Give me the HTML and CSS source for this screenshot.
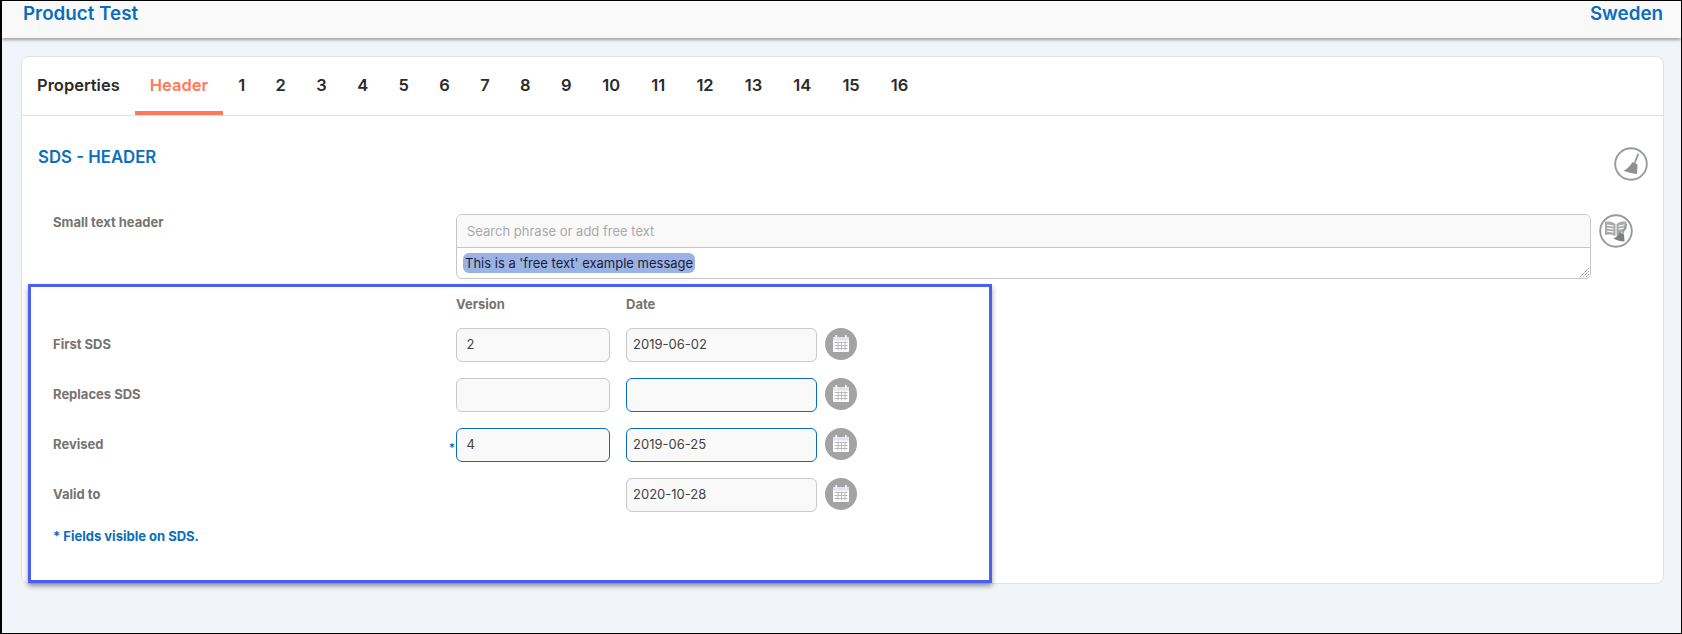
FILE: index.html
```html
<!DOCTYPE html>
<html lang="en">
<head>
<meta charset="utf-8">
<title>SDS Header</title>
<link rel="stylesheet" href="styles.css">
</head>
<body>
<div class="frame">
  <header class="topbar">
    <span class="topbar-title">Product Test</span>
    <span class="topbar-title">Sweden</span>
  </header>
  <main class="content">
    <section class="card">
      <nav class="tabs">
        <a class="tab">Properties</a>
        <a class="tab tab-active">Header</a>
        <a class="tab tab-num">1</a><a class="tab tab-num">2</a><a class="tab tab-num">3</a><a class="tab tab-num">4</a>
        <a class="tab tab-num">5</a><a class="tab tab-num">6</a><a class="tab tab-num">7</a><a class="tab tab-num">8</a>
        <a class="tab tab-num">9</a><a class="tab tab-wide">10</a><a class="tab tab-wide">11</a><a class="tab tab-wide">12</a>
        <a class="tab tab-wide">13</a><a class="tab tab-wide">14</a><a class="tab tab-wide">15</a><a class="tab tab-wide">16</a>
      </nav>
      <div class="body">
        <div class="title-row">
          <h2 class="section-title">SDS - HEADER</h2>
          <span class="ring-icon">
            <svg viewBox="0 0 34 34" width="34" height="34"><circle cx="17" cy="17" r="15.8" fill="#fff" stroke="#999" stroke-width="1.9"/><path d="M24.4 6.8 20.6 16" stroke="#8a9bb0" stroke-width="1.8" fill="none"/><path d="M18.5 15 23.5 17.2 23 27C18 26.5 13 25.5 9.5 23.5 12.5 22.5 16 19.5 18.5 15Z" fill="#8f8f8f"/></svg>
          </span>
        </div>
        <div class="text-row">
          <label class="field-label">Small text header</label>
          <div class="phrase-box">
            <div class="phrase-search">Search phrase or add free text</div>
            <div class="phrase-text">
              <span class="chip">This is a 'free text' example message</span>
              <svg class="grip" viewBox="0 0 9 9" width="9" height="9"><path d="M8.5.5.5 8.5M8.5 3.5 3.5 8.5M8.5 6.5 6.5 8.5" stroke="#555" stroke-width="1" stroke-dasharray="1 1" fill="none"/></svg>
            </div>
          </div>
          <span class="ring-icon">
            <svg viewBox="0 0 34 34" width="34" height="34"><circle cx="17" cy="17" r="15.8" fill="#fff" stroke="#999" stroke-width="1.9"/><path d="M6 8C10 7 14 8 16.5 10V22C14 20.5 10 20 6 21Z" fill="#a9a9a9"/><path d="M17.5 10C20 8 24 7 27.5 8V15L22 19 17.5 22Z" fill="#a9a9a9"/><path d="M8 11 14.5 12.2M8 14 14.5 15.2M8 17 14.5 18.2M19.5 12.2 25.5 11M19.5 15.2 25.5 14" stroke="#fff" stroke-width="1.2"/><path d="M27.5 10 23.5 20" stroke="#8a9bb0" stroke-width="1.5"/><path d="M20.5 18.5 25 20.5 25.5 27.5C21.5 27.5 18 26.5 14.5 24.5 17 23.5 19 21.5 20.5 18.5Z" fill="#7f7f7f"/></svg>
          </span>
        </div>
        <div class="dates">
          <div class="dates-head dates-head-first">Version</div>
          <div class="dates-head dates-head-date">Date</div>
          <span></span>
          <label class="field-label">First SDS</label>
          <div class="input">2</div>
          <div class="input input-date">2019-06-02</div>
          <span class="cal"><svg viewBox="0 0 32 32" width="32" height="32"><use href="#calendar"/></svg></span>
          <label class="field-label">Replaces SDS</label>
          <div class="input"></div>
          <div class="input input-date input-focus"></div>
          <span class="cal"><svg viewBox="0 0 32 32" width="32" height="32"><use href="#calendar"/></svg></span>
          <label class="field-label">Revised</label>
          <div class="input input-focus"><i class="star">*</i>4</div>
          <div class="input input-date input-focus">2019-06-25</div>
          <span class="cal"><svg viewBox="0 0 32 32" width="32" height="32"><use href="#calendar"/></svg></span>
          <label class="field-label">Valid to</label>
          <span></span>
          <div class="input input-date">2020-10-28</div>
          <span class="cal"><svg viewBox="0 0 32 32" width="32" height="32"><use href="#calendar"/></svg></span>
        </div>
        <p class="note">* Fields visible on SDS.</p>
      </div>
      <div class="highlight"></div>
    </section>
  </main>
</div>
<svg class="defs" width="0" height="0">
  <defs>
    <g id="calendar">
      <circle cx="16" cy="16" r="16" fill="#a3a3a3"/>
      <rect x="8" y="9" width="16" height="15" rx="1" fill="#fff"/>
      <rect x="8" y="9" width="16" height="3.5" fill="#e4e0ee"/>
      <rect x="10.5" y="7" width="1.6" height="3.5" fill="#fff"/>
      <rect x="20" y="7" width="1.6" height="3.5" fill="#fff"/>
      <path d="M9.5 14.5H22.5M9.5 17.5H22.5M9.5 20.5H22.5M13 13.5V22.5M16.5 13.5V22.5M20 13.5V22.5" stroke="#b3b3b3" stroke-width=".9" fill="none"/>
    </g>
  </defs>
</svg>
</body>
</html>
```
FILE: styles.css
```css
* { box-sizing: border-box; }
html, body { margin: 0; padding: 0; }
body { font-family: Inter, "Liberation Sans", sans-serif; }
.frame {
  width: 1682px; height: 634px; overflow: hidden;
  border: 1px solid #000; border-left-width: 2px;
  background: #f1f5f9; display: flex; flex-direction: column;
}
.topbar {
  height: 37px; flex: none; background: #f9f9f9; padding: 2px 18px 0 21px;
  display: flex; justify-content: space-between; align-items: flex-start;
  box-shadow: 0 2px 3px rgba(0,0,0,.35); position: relative;
}
.topbar-title { font-size: 18.8px; line-height: 22px; font-weight: 600; color: #0a6ebd; }
.content { padding: 18px 17px 0 19px; }
.card {
  position: relative; height: 528px; background: #fff;
  border: 1px solid #dfe1e4; border-radius: 8px;
}
.tabs { display: flex; height: 59px; border-bottom: 1px solid #dfe1e4; }
.tab {
  padding: 0 15px; height: 58px; line-height: 57px; font-size: 16.5px; font-weight: 600;
  color: #2b2b2b; border-bottom: 4px solid transparent;
}
.tab-num { padding: 0 15.2px; }
.tab-wide { padding: 0 15.55px; }
.tab-active { color: #ff7a5c; border-bottom-color: #ff7a5c; }
.body { padding: 0 16px; }
.title-row { display: flex; justify-content: space-between; align-items: flex-start; padding-top: 32px; height: 98px; }
.section-title { margin: 0; font-size: 16.8px; line-height: 18px; font-weight: 600; color: #0a6ebd; }
.ring-icon { display: block; width: 34px; height: 34px; flex: none; }
.title-row .ring-icon { margin-right: -1px; margin-top: -1px; }
.text-row { display: flex; align-items: flex-start; }
.field-label { font-size: 13px; line-height: 16px; font-weight: 700; color: #77736f; }
.text-row .field-label { width: 418px; padding-left: 15px; flex: none; }
.phrase-box { width: 1135px; height: 65px; border: 1px solid #c6c6c6; border-radius: 6px; overflow: hidden; flex: none; }
.phrase-search {
  height: 33px; background: #f9f9f9; border-bottom: 1px solid #c6c6c6;
  padding: 0 10px; font-size: 13px; line-height: 33px; color: #a9a9a9;
}
.phrase-text { position: relative; padding: 5px 6px; height: 30px; }
.chip {
  display: block; width: max-content; background: #9ab3e3; border-radius: 6px; height: 20px;
  padding: 0 2px; font-size: 13px; line-height: 20px; color: #1c1c3c;
}
.grip { position: absolute; right: 1px; bottom: 1px; }
.text-row .ring-icon { margin-left: 8px; }
.dates {
  display: grid; grid-template-columns: 418px 154px 207px 40px;
  grid-template-rows: 33px repeat(4, 34px); row-gap: 16px; align-items: center;
}
.dates > .field-label { padding-left: 15px; padding-bottom: 2px; }
.dates > .input-date { margin-left: 16px; width: 191px; }
.dates > .cal { margin-left: 8px; align-self: start; }
.dates-head { font-size: 13px; font-weight: 700; color: #77736f; line-height: 16px; align-self: end; }
.dates-head-first { grid-column: 2; }
.dates-head-date { padding-left: 16px; }
.input {
  position: relative; height: 34px; border: 1px solid #c9c9c9; border-radius: 6px; background: #f9f9f9;
  padding: 0 9.5px; font-size: 13px; line-height: 31px; color: #444;
}
.input-date { padding: 0 6px; }
.input-focus { border-color: #0a6ebd; }
.star { position: absolute; left: -8px; top: 3px; font-style: normal; font-size: 12px; color: #0a4e9d; }
.cal { display: block; width: 32px; height: 32px; }
.note { margin: 16px 0 0; padding-left: 15px; font-size: 13px; line-height: 16px; font-weight: 700; color: #0a6ebd; }
.highlight {
  position: absolute; left: 6px; top: 227px; width: 964px; height: 299px;
  border: 3px solid #4a5ff0; box-shadow: 0 3px 5px rgba(0,0,0,.4); pointer-events: none;
}
.defs { position: absolute; }
```
